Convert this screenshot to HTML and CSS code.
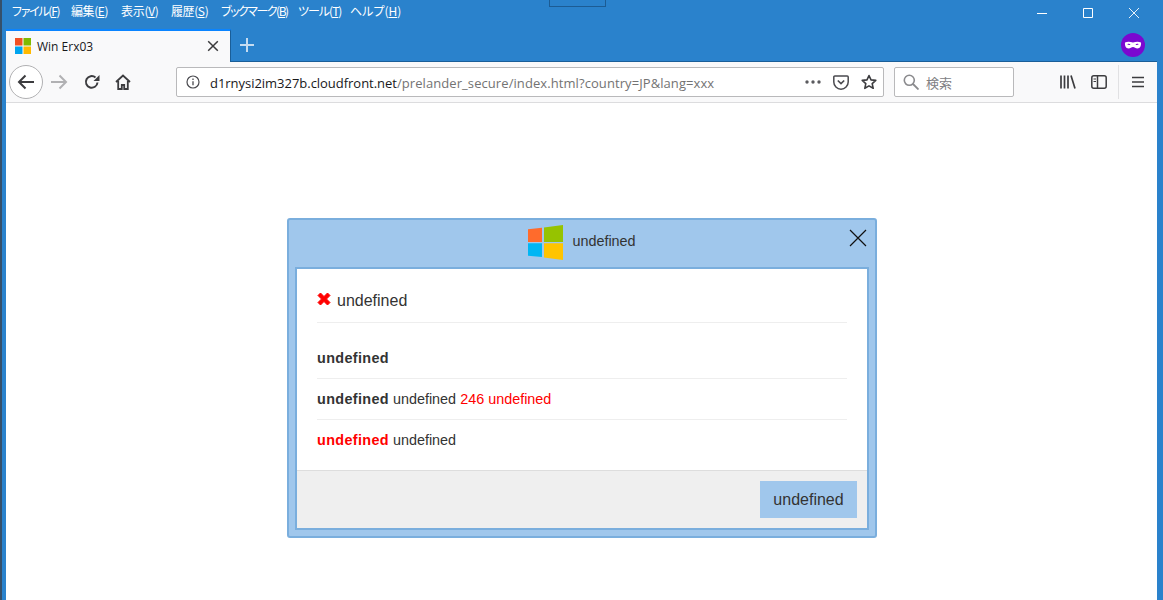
FILE: index.html
```html
<!DOCTYPE html>
<html lang="ja">
<head>
<meta charset="utf-8">
<title>Win Erx03</title>
<link rel="stylesheet" href="styles.css">
</head>
<body>
<div class="window">
  <div class="titlebar">
    <nav class="menu">
      <span class="menu-item m1">ファイル(<u>F</u>)</span>
      <span class="menu-item m2">編集(<u>E</u>)</span>
      <span class="menu-item m3">表示(<u>V</u>)</span>
      <span class="menu-item m4">履歴(<u>S</u>)</span>
      <span class="menu-item m5">ブックマーク(<u>B</u>)</span>
      <span class="menu-item m6">ツール(<u>T</u>)</span>
      <span class="menu-item m7">ヘルプ(<u>H</u>)</span>
    </nav>
    <div class="caption">
      <svg class="cap-icon" width="12" height="12" viewBox="0 0 12 12"><path d="M1 6.500h10" stroke="#fff" fill="none"/></svg>
      <svg class="cap-icon" width="12" height="12" viewBox="0 0 12 12"><path d="M1.500 1.500h9v9h-9z" stroke="#fff" fill="none"/></svg>
      <svg class="cap-icon" width="12" height="12" viewBox="0 0 12 12"><path d="M1 1l10 10M11 1L1 11" stroke="#fff" fill="none" stroke-width=".9"/></svg>
    </div>
  </div>
  <div class="drag-mark"></div>
  <div class="tabbar">
    <div class="tab">
      <svg class="favicon" width="16" height="16" viewBox="0 0 16 16"><path fill="#f25022" d="M0 0h7.500v7.500H0z"/><path fill="#7fba00" d="M8.500 0H16v7.500H8.500z"/><path fill="#00a4ef" d="M0 8.500h7.500V16H0z"/><path fill="#ffb900" d="M8.500 8.500H16V16H8.500z"/></svg>
      <span class="tab-title">Win Erx03</span>
      <svg class="tab-close" width="12" height="12" viewBox="0 0 12 12"><path d="M1.200 1.200l9.600 9.600M10.800 1.200l-9.600 9.600" stroke="#3a3a3c" stroke-width="1.500" fill="none"/></svg>
    </div>
    <svg class="newtab" width="16" height="16" viewBox="0 0 16 16"><path d="M8 1v14M1 8h14" stroke="#c5dcf1" stroke-width="2" fill="none"/></svg>
    <div class="tabbar-fill"></div>
    <svg class="mask" width="24" height="24" viewBox="0 0 24 24"><circle cx="12" cy="12" r="12" fill="#7a08d0"/><path fill="#fff" fill-rule="evenodd" d="M4 9.500c2.500-1.300 5-1 8 0 3-1 5.500-1.300 8 0 .4 3-1 6-3.500 6-2 0-3-1.600-4.500-1.600s-2.500 1.600-4.500 1.600C5 15.500 3.600 12.500 4 9.500zM6.300 11.200c1-.6 2.400-.5 3.200.3-.9.800-2.300.6-3.200-.3zM17.700 11.200c-1-.6-2.400-.5-3.200.3.900.800 2.300.6 3.200-.3z"/></svg>
  </div>
  <div class="toolbar">
    <button class="back" type="button" aria-label="back">
      <svg width="18" height="16" viewBox="0 0 18 16"><path d="M17 8H2M8.500 1.500L2 8l6.500 6.500" stroke="#3c3c3f" stroke-width="2" fill="none"/></svg>
    </button>
    <svg class="tool fwd" width="18" height="16" viewBox="0 0 18 16"><path d="M1 8h15M9.500 1.500L16 8l-6.500 6.500" stroke="#b1b1b3" stroke-width="2" fill="none"/></svg>
    <svg class="tool reload" width="16" height="16" viewBox="0 0 16 16"><path d="M13.500 8.500a5.800 5.800 0 1 1-2-5" stroke="#3c3c3f" stroke-width="2" fill="none"/><path d="M15.500 1v6h-6z" fill="#3c3c3f"/></svg>
    <svg class="tool home" width="16" height="16" viewBox="0 0 16 16"><path d="M1 8l7-6.500L15 8M3.200 7v8h3.600v-4h2.400v4h3.600V7" stroke="#3c3c3f" stroke-width="1.800" fill="none"/></svg>
    <div class="urlbar">
      <svg class="info" width="14" height="14" viewBox="0 0 14 14"><circle cx="7" cy="7" r="6" stroke="#4a4a4f" stroke-width="1.200" fill="none"/><path d="M7 6.200v4M7 3.500v1.400" stroke="#4a4a4f" stroke-width="1.300"/></svg>
      <span class="url"><span class="host">d1rnysi2im327b.cloudfront.net</span>/prelander_secure/index.html?country=JP&amp;lang=xxx</span>
      <svg class="more" width="16" height="4" viewBox="0 0 16 4"><circle cx="2" cy="2" r="1.700" fill="#5a5a5e"/><circle cx="8" cy="2" r="1.700" fill="#5a5a5e"/><circle cx="14" cy="2" r="1.700" fill="#5a5a5e"/></svg>
      <svg class="pocket" width="16" height="15" viewBox="0 0 16 15"><path d="M1.800 1h12.400a1 1 0 0 1 1 1v5a7.200 7.200 0 0 1-14.400 0V2a1 1 0 0 1 1-1z" stroke="#4a4a4f" stroke-width="1.500" fill="none"/><path d="M4.800 5.500L8 8.500l3.200-3" stroke="#4a4a4f" stroke-width="1.700" fill="none"/></svg>
      <svg class="star" width="16" height="16" viewBox="0 0 16 16"><path d="M8 1.500l2 4.400 4.800.5-3.600 3.200 1 4.700L8 11.900l-4.200 2.400 1-4.700L1.200 6.400 6 5.900z" stroke="#3c3c3f" stroke-width="1.600" stroke-linejoin="round" fill="none"/></svg>
    </div>
    <div class="searchbar">
      <svg class="loupe" width="16" height="16" viewBox="0 0 16 16"><circle cx="6.300" cy="6.300" r="5" stroke="#8a8a8d" stroke-width="1.600" fill="none"/><path d="M10 10l5.500 5.500" stroke="#8a8a8d" stroke-width="1.800"/></svg>
      <span class="search-text">検索</span>
    </div>
    <svg class="tool library" width="16" height="16" viewBox="0 0 16 16"><path d="M1 1.500v13M4.500 1.500v13M8 1.500v13M11 1.500l4 13" stroke="#3c3c3f" stroke-width="1.700" fill="none"/></svg>
    <svg class="tool sidebar" width="16" height="14" viewBox="0 0 16 14"><rect x=".8" y=".8" width="14.400" height="12.400" rx="2" stroke="#3c3c3f" stroke-width="1.500" fill="none"/><path d="M6.500 1v12" stroke="#3c3c3f" stroke-width="1.500"/><path d="M2.500 3.500h2.500v1h-2.500zM2.500 6h2.500v1h-2.500z" fill="#3c3c3f"/></svg>
    <div class="sep"></div>
    <svg class="tool burger" width="12" height="12" viewBox="0 0 12 12"><path d="M0 1.500h12M0 6h12M0 10.500h12" stroke="#3c3c3f" stroke-width="1.500"/></svg>
  </div>
  <main class="page">
    <section class="dialog">
      <header class="dialog-head">
        <svg class="winlogo" width="36" height="36" viewBox="0 0 36 36"><path fill="#ff6b2c" d="M1 4.200L15 2.800V17H1z"/><path fill="#96c300" d="M17 2.500L36 0V17H17z"/><path fill="#00b6f4" d="M1 18.300h14v13.800L1 30.700z"/><path fill="#ffc400" d="M17 18.300h19V35l-19-2.500z"/></svg>
        <span class="dialog-title">undefined</span>
        <svg class="dialog-close" width="18" height="18" viewBox="0 0 18 18"><path d="M1 1l16 16M17 1L1 17" stroke="#111" stroke-width="1.200" fill="none"/></svg>
      </header>
      <div class="dialog-inner">
        <div class="dialog-body">
          <div class="heading">
            <svg class="cross" width="14" height="14" viewBox="0 0 14 14"><path d="M1 3.500L3.500 1 7 4.500 10.500 1 13 3.500 9.500 7 13 10.500 10.500 13 7 9.500 3.500 13 1 10.500 4.500 7z" fill="#f00" stroke="#f00" stroke-width="1" stroke-linejoin="round"/></svg>
            <span>undefined</span>
          </div>
          <p class="row first"><b>undefined</b></p>
          <p class="row"><b>undefined</b> undefined <span class="red">246 undefined</span></p>
          <p class="row last"><b class="red">undefined</b> undefined</p>
        </div>
        <footer class="dialog-foot">
          <button class="action" type="button">undefined</button>
        </footer>
      </div>
    </section>
  </main>
</div>
</body>
</html>
```
FILE: styles.css
```css
* { box-sizing: border-box; }
html, body { margin: 0; padding: 0; height: 100%; overflow: hidden; }
body { background: #2a82cc; font-family: "Liberation Sans", Arial, sans-serif; }

.window { position: relative; height: 600px; width: 1163px; display: flex; flex-direction: column; padding: 0 6px; box-shadow: inset 2px 0 0 #35506a; }

.titlebar { height: 29px; display: flex; align-items: center; justify-content: space-between; margin-right: -6px; }
.menu { display: flex; height: 22px; align-items: center; padding-left: 6px; margin-top: -8px; }
.menu-item { color: #fff; font: 12px "Noto Sans CJK JP", sans-serif; font-feature-settings: "palt"; white-space: nowrap; }
.m1 { width: 59px; letter-spacing: -1.300px; }
.m2 { width: 50px; letter-spacing: -.400px; }
.m3 { width: 50px; letter-spacing: -.300px; }
.m4 { width: 50px; letter-spacing: -.400px; }
.m5 { width: 77px; letter-spacing: -1.500px; }
.m6 { width: 52px; letter-spacing: -1px; }
.m7 { width: 50px; }
.caption { display: flex; gap: 34px; padding-right: 23px; margin-top: -3px; }
.drag-mark { position: absolute; left: 549px; top: -1px; width: 57px; height: 8px; border: 1px solid #1c5c94; }

.tabbar { height: 33px; display: flex; align-items: center; border-bottom: 1px solid #1a5e98; }
.tab { width: 225px; height: 33px; background: #f9f9fa; border-top: 2px solid #0a84ff; border-right: 1px solid #1a5e98; display: flex; align-items: center; padding: 0 11px 0 9px; flex: none; }
.favicon { flex: none; }
.tab-title { flex: 1; margin-left: 6px; font: 12px "Open Sans", sans-serif; color: #18181a; }
.tab-close { flex: none; }
.newtab { margin-left: 8px; flex: none; }
.tabbar-fill { flex: 1; }
.mask { margin-right: 12px; flex: none; }

.toolbar { height: 41px; background: #f9f9fa; border-bottom: 1px solid #dcdcde; display: flex; align-items: center; padding-left: 3px; flex: none; }
.back { width: 34px; height: 34px; border-radius: 50%; border: 1px solid #b1b1b3; background: #fff; padding: 0; display: flex; align-items: center; justify-content: center; flex: none; }
.tool { flex: none; }
.fwd { margin-left: 7px; }
.reload { margin-left: 16px; }
.home { margin-left: 15px; }
.urlbar { margin-left: 45px; width: 708px; height: 30px; background: #fff; border: 1px solid #b9b9bb; border-radius: 2px; display: flex; align-items: center; padding: 0 6px 0 9px; flex: none; }
.info { flex: none; }
.url { flex: 1; margin-left: 10px; padding-top: 1px; font: 13px "Open Sans", sans-serif; letter-spacing: .08px; color: #737373; white-space: nowrap; overflow: hidden; }
.host { color: #18181a; letter-spacing: -.03px; }
.more { flex: none; margin-right: 12px; }
.pocket { flex: none; margin-right: 12px; }
.star { flex: none; }
.searchbar { margin-left: 10px; width: 120px; height: 30px; background: #fff; border: 1px solid #b9b9bb; border-radius: 2px; display: flex; align-items: center; padding-left: 8px; flex: none; }
.loupe { flex: none; }
.search-text { margin-left: 7px; font: 13px "Noto Sans CJK JP", sans-serif; color: #808083; }
.library { margin-left: 46px; }
.sidebar { margin-left: 15px; }
.sep { width: 1px; height: 34px; background: #e1e1e3; margin-left: 11px; flex: none; }
.burger { margin-left: 13px; }

.page { flex: 1; background: #fff; padding-top: 115px; padding-left: 281px; }
.dialog { position: relative; width: 590px; height: 320px; background: #a0c7ec; border: 2px solid #7aaedd; border-radius: 3px; padding: 0 6px 6px; display: flex; flex-direction: column; color: #333; }
.dialog-head { height: 47px; display: flex; align-items: center; justify-content: center; gap: 9px; flex: none; padding-bottom: 5px; }
.winlogo { flex: none; margin-left: -1px; margin-top: 4px; }
.dialog-title { font-size: 14.400px; }
.dialog-close { position: absolute; right: 8px; top: 9px; }
.dialog-inner { flex: 1; border: 2px solid #7aaedd; background: #fff; display: flex; flex-direction: column; }
.dialog-body { flex: 1; padding: 0 20px; }
.heading { height: 54px; border-bottom: 1px solid #eee; display: flex; align-items: center; gap: 6px; font-size: 16px; padding-top: 11px; }
.cross { flex: none; margin-top: -4px; }
.row { margin: 0; height: 41px; line-height: 40px; font-size: 14.400px; border-bottom: 1px solid #eee; }
.row.first { height: 56px; line-height: 70px; }
.row.last { border-bottom: 0; }
.row b { letter-spacing: .35px; }
.red { color: #f00; }
.dialog-foot { height: 58px; background: #efefef; border-top: 1px solid #ddd; display: flex; align-items: center; justify-content: flex-end; padding: 0 10px; flex: none; }
.action { width: 97px; height: 37px; background: #a0c7ec; border: 0; padding: 0; font: 16px "Liberation Sans", Arial, sans-serif; color: #333; }
```
